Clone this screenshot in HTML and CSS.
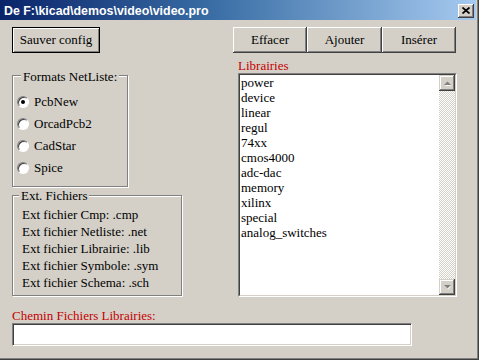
FILE: index.html
```html
<!DOCTYPE html>
<html lang="fr">
<head>
<meta charset="utf-8">
<title>video.pro</title>
<link rel="stylesheet" href="styles.css">
</head>
<body>
<div class="window">
  <div class="titlebar">
    <span class="title">De F:\kicad\demos\video\video.pro</span>
    <button class="close" aria-label="Fermer">
      <svg width="8" height="7" viewBox="0 0 8 7"><path d="M0.5 0.5 L7.5 6.5 M7.5 0.5 L0.5 6.5" stroke="#000" stroke-width="1.7" fill="none"/></svg>
    </button>
  </div>
  <div class="content">
    <div class="toolbar">
      <button class="btn default sauver">Sauver config</button>
      <div class="btn-group">
        <button class="btn w74">Effacer</button>
        <button class="btn w75">Ajouter</button>
        <button class="btn w74">Insérer</button>
      </div>
    </div>
    <div class="main">
      <div class="left">
        <div class="group formats">
          <span class="legend">Formats NetListe:</span>
          <div class="radio-row"><span class="radio checked"><span class="dot"></span></span><span>PcbNew</span></div>
          <div class="radio-row"><span class="radio"></span><span>OrcadPcb2</span></div>
          <div class="radio-row"><span class="radio"></span><span>CadStar</span></div>
          <div class="radio-row"><span class="radio"></span><span>Spice</span></div>
        </div>
        <div class="group ext">
          <span class="legend">Ext. Fichiers</span>
          <div class="ext-row">Ext fichier Cmp: .cmp</div>
          <div class="ext-row">Ext fichier Netliste: .net</div>
          <div class="ext-row">Ext fichier Librairie: .lib</div>
          <div class="ext-row">Ext fichier Symbole: .sym</div>
          <div class="ext-row">Ext fichier Schema: .sch</div>
        </div>
      </div>
      <div class="right">
        <div class="label red">Librairies</div>
        <div class="listbox">
          <div class="listbox-in">
            <div class="items">
              <div>power</div>
              <div>device</div>
              <div>linear</div>
              <div>regul</div>
              <div>74xx</div>
              <div>cmos4000</div>
              <div>adc-dac</div>
              <div>memory</div>
              <div>xilinx</div>
              <div>special</div>
              <div>analog_switches</div>
            </div>
            <div class="scrollbar">
              <div class="sb-btn">
                <svg width="7" height="5" viewBox="0 0 7 5"><polygon points="1,5 4,2 7,5" fill="#fff"/><polygon points="0,4 3.5,0.5 7,4" fill="#808080"/></svg>
              </div>
              <div class="sb-track"></div>
              <div class="sb-btn">
                <svg width="7" height="5" viewBox="0 0 7 5"><polygon points="1,1 4,4.5 7,1" fill="#fff"/><polygon points="0,0 7,0 3.5,3.5" fill="#808080"/></svg>
              </div>
            </div>
          </div>
        </div>
      </div>
    </div>
    <div class="path">
      <div class="label red">Chemin Fichiers Librairies:</div>
      <div class="input"></div>
    </div>
  </div>
</div>
</body>
</html>
```
FILE: styles.css
```css
html, body {
  margin: 0;
  padding: 0;
  background: #d4d0c8;
}

.window {
  width: 479px;
  height: 360px;
  box-sizing: border-box;
  background: #d4d0c8;
  border-right: 1px solid #404040;
  border-bottom: 1px solid #404040;
  box-shadow: inset -1px -1px 0 #808080;
  display: flex;
  flex-direction: column;
  font-family: "Liberation Serif", "Times New Roman", serif;
  font-size: 13px;
  color: #000;
}

.titlebar {
  height: 20px;
  margin-right: 2px;
  box-sizing: border-box;
  padding: 1px 2px 0 4px;
  background: linear-gradient(to right, #0a246a 0%, #3a6ea5 45%, #a6caf0 100%);
  display: flex;
  align-items: center;
  justify-content: space-between;
}

.title {
  color: #fff;
  font-family: "Liberation Sans", Arial, sans-serif;
  font-weight: bold;
  font-size: 12.4px;
}

.close {
  width: 16px;
  height: 14px;
  padding: 0;
  border: none;
  background: #d4d0c8;
  box-shadow: inset -1px -1px 0 #404040, inset 1px 1px 0 #fff, inset -2px -2px 0 #808080;
  display: flex;
  align-items: center;
  justify-content: center;
}

.content {
  flex: 1;
  padding: 7px 0 0 12px;
}

.toolbar {
  width: 444px;
  display: flex;
  justify-content: space-between;
}

.btn {
  box-sizing: border-box;
  height: 26px;
  padding: 0;
  border: none;
  background: #d4d0c8;
  font: inherit;
  color: #000;
  box-shadow: inset -1px -1px 0 #404040, inset 1px 1px 0 #fff, inset -2px -2px 0 #808080, inset 2px 2px 0 #d4d0c8;
}

.btn.default {
  border: 1px solid #000;
  box-shadow: inset 1px 1px 0 #fff, inset -1px -1px 0 #808080;
}

.sauver { width: 88px; }
.w74 { width: 74px; }
.w75 { width: 75px; }

.btn-group {
  display: flex;
}

.main {
  display: grid;
  grid-template-columns: 170px 219px;
  column-gap: 56px;
}

.left {
  padding-top: 22px;
  display: flex;
  flex-direction: column;
  align-items: flex-start;
}

.group {
  position: relative;
  box-sizing: border-box;
  border: 1px solid #808080;
  box-shadow: 1px 1px 0 #fff, inset 1px 1px 0 #fff;
}

.legend {
  position: absolute;
  padding: 0 2px;
  line-height: 15px;
  background: #d4d0c8;
  white-space: nowrap;
}

.formats {
  width: 116px;
  height: 112px;
  padding: 15px 0 0 4px;
}

.formats .legend {
  top: -7px;
  left: 8px;
}

.radio-row {
  height: 22px;
  display: flex;
  align-items: center;
  gap: 5px;
}

.radio {
  width: 12px;
  height: 12px;
  box-sizing: border-box;
  border-radius: 50%;
  background: #fff;
  border: 1px solid;
  border-color: #808080 #fff #fff #808080;
  box-shadow: inset 1px 1px 0 #404040;
  display: flex;
  align-items: center;
  justify-content: center;
}

.dot {
  width: 4px;
  height: 4px;
  border-radius: 50%;
  background: #000;
}

.ext {
  width: 170px;
  height: 101px;
  margin-top: 8px;
  padding: 10px 0 0 9px;
}

.ext .legend {
  top: -8px;
  left: 6px;
}

.ext-row {
  line-height: 17px;
  white-space: nowrap;
}

.label {
  line-height: 14px;
}

.red {
  color: #c40000;
}

.right .label {
  margin-top: 6px;
}

.listbox {
  box-sizing: border-box;
  height: 224px;
  border: 1px solid;
  border-color: #808080 #fff #fff #808080;
}

.listbox-in {
  box-sizing: border-box;
  height: 100%;
  border: 1px solid;
  border-color: #404040 #d4d0c8 #d4d0c8 #404040;
  background: #fff;
  display: flex;
}

.items {
  flex: 1;
  padding-left: 1px;
  line-height: 15px;
}

.scrollbar {
  width: 16px;
  display: flex;
  flex-direction: column;
}

.sb-btn {
  height: 16px;
  box-sizing: border-box;
  background: #d4d0c8;
  box-shadow: inset -1px -1px 0 #404040, inset 1px 1px 0 #d4d0c8, inset -2px -2px 0 #808080, inset 2px 2px 0 #fff;
  display: flex;
  align-items: center;
  justify-content: center;
}

.sb-track {
  flex: 1;
  background-color: #fff;
  background-image: conic-gradient(#d4d0c8 25%, #fff 0 50%, #d4d0c8 0 75%, #fff 0);
  background-size: 2px 2px;
}

.path {
  margin-top: 12px;
}

.input {
  width: 400px;
  height: 23px;
  box-sizing: border-box;
  background: #fff;
  border: 1px solid;
  border-color: #808080 #fff #fff #808080;
  box-shadow: inset 1px 1px 0 #404040, inset -1px -1px 0 #d4d0c8;
}
```
